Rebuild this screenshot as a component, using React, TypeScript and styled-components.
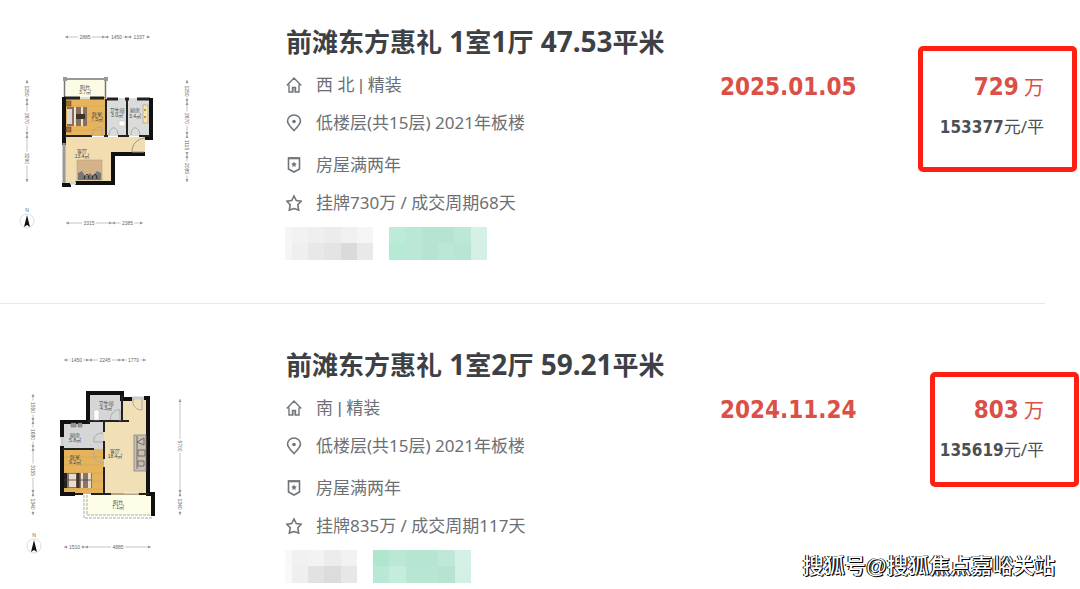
import React from "react";
import styled, { createGlobalStyle } from "styled-components";

const Global = createGlobalStyle`
  * { box-sizing: border-box; }
  body {
    margin: 0;
    background: #fff;
    color: #3d4145;
    font-family: "Noto Sans", "Noto Sans CJK SC", sans-serif;
  }
`;

const Page = styled.main`
  position: relative;
  overflow: hidden;
`;

const List = styled.ul`
  list-style: none;
  margin: 0;
  padding: 0 35px 0 0;
  display: flex;
  flex-direction: column;
  gap: 19px;
`;

const Item = styled.li`
  position: relative;
  display: grid;
  grid-template-columns: 286px 1fr 135px 190px;
  padding: 24px 0 43px;
  border-bottom: 1px solid #e9e9e9;
  &:last-child {
    border-bottom: 0;
    padding-bottom: 5px;
  }
`;

const PlanLink = styled.a`
  display: block;
  height: 210px;
  color: inherit;
`;

const PlanSvg = styled.svg`
  display: block;
  font-family: "Liberation Sans", "Noto Sans CJK SC", sans-serif;
  font-size: 5px;
  fill: #666;
`;

const Title = styled.h2`
  margin: 0 0 13px;
  font-size: 26px;
  line-height: 36px;
  font-weight: 700;
  white-space: nowrap;
`;

const Num = styled.span`
  font-size: 28px;
  line-height: 28px;
`;

const Facts = styled.div`
  display: flex;
  flex-direction: column;
  gap: 18px;
`;

const FactPair = styled.div`
  display: flex;
  flex-direction: column;
  gap: 14px;
`;

const Fact = styled.div`
  display: flex;
  align-items: center;
  gap: 14px;
  font-size: 17px;
  line-height: 24px;
  color: #6c7074;
  white-space: nowrap;
`;

const Bar = styled.span`
  font-family: "Liberation Sans", sans-serif;
  line-height: 1;
`;

const Icon = styled.svg`
  width: 16px;
  height: 18px;
  flex: none;
  fill: none;
  stroke: #70757a;
  stroke-width: 1.6;
`;

const Tags = styled.div`
  display: flex;
  gap: 16px;
  margin: 12px 0 0 -1px;
`;

const Mosaic = styled.svg`
  display: block;
  height: 33px;
`;

const DealDate = styled.div`
  margin-top: 46px;
  font: 700 24px/34px "DejaVu Sans Condensed", "DejaVu Sans", sans-serif;
  color: #dc4f46;
  white-space: nowrap;
`;

const Price = styled.div`
  margin-top: 46px;
  padding-right: 1px;
  text-align: right;
  white-space: nowrap;
`;

const Total = styled.div`
  font-size: 20px;
  line-height: 34px;
  color: #dc4f46;
  b {
    font: 700 24px/34px "DejaVu Sans Condensed", "DejaVu Sans", sans-serif;
  }
`;

const Unit = styled.div`
  margin-top: 10px;
  font-size: 17px;
  line-height: 24px;
  color: #4c5054;
  b {
    font: 700 17px/24px "DejaVu Sans Condensed", "DejaVu Sans", sans-serif;
  }
`;

const Highlight = styled.div<{ $wide?: boolean }>`
  position: absolute;
  top: ${(p) => (p.$wide ? 46 : 49)}px;
  right: ${(p) => (p.$wide ? -32 : -34)}px;
  width: ${(p) => (p.$wide ? 159 : 149)}px;
  height: ${(p) => (p.$wide ? 126 : 115)}px;
  border: 5px solid #ff2014;
  border-radius: 5px;
  pointer-events: none;
`;

const Watermark = styled.div`
  position: absolute;
  right: 25px;
  bottom: 6px;
  font: 500 21px/32px "Liberation Sans", "Noto Sans CJK SC", sans-serif;
  color: #fff;
  text-shadow: 1px 1px 0 #000, -1px 0 0 #000, 1px 0 0 #000;
  white-space: nowrap;
`;

const HomeIcon = () => (
  <Icon viewBox="0 0 16 18" aria-hidden="true">
    <path d="M.8 9.500 8 2l7.200 7.500M3 8.500V16h3.500v-4.500h3V16H13V8.500" strokeWidth="1.400" />
    <path d="M8 12v4.500" strokeWidth="1" />
  </Icon>
);
const PinIcon = () => (
  <Icon viewBox="0 0 16 18" aria-hidden="true">
    <path d="M8 16.500C4 12.500 1.500 10 1.500 7a6.500 6 0 0 1 13 0c0 3-2.500 5.500-6.500 9.500Z" />
    <circle cx="8" cy="7.500" r="1.800" fill="#70757a" stroke="none" />
  </Icon>
);
const BadgeIcon = () => (
  <Icon viewBox="0 0 16 18" aria-hidden="true">
    <path d="M2.500 2h11v11L8 16l-5.500-3Z" />
    <path d="M2 2.300h12" strokeWidth="2" />
    <path d="m8 5.500.9 1.800 1.900.3-1.400 1.400.3 2L8 10.100l-1.700.9.3-2-1.400-1.400 1.900-.3Z" fill="#70757a" stroke="none" />
  </Icon>
);
const StarIcon = () => (
  <Icon viewBox="0 0 16 18" aria-hidden="true">
    <path d="M8 2 10.300 6.500 15.200 7.300 11.800 10.800 12.700 16 8 14.600 3.300 16 4.200 10.800.8 7.300 5.700 6.500Z" />
  </Icon>
);

type Cells = { edges: number[]; top: string[]; bottom: string[] };

const CensoredTag = ({ edges, top, bottom }: Cells) => {
  const width = edges[edges.length - 1];
  return (
    <Mosaic width={width} viewBox={`0 0 ${width} 33`} shapeRendering="crispEdges" aria-hidden="true">
      {top.map((c, i) => (
        <rect key={i} x={edges[i]} y="0" width={edges[i + 1] - edges[i]} height="16" fill={c} />
      ))}
      {bottom.map((c, i) => (
        <rect key={i} x={edges[i]} y="16" width={edges[i + 1] - edges[i]} height="17" fill={c} />
      ))}
    </Mosaic>
  );
};

const greyWide: Cells = {
  edges: [0, 7, 23, 39, 56, 72, 88],
  top: ["#f5f5f5", "#f2f2f2", "#efefef", "#ececec", "#f0f0f0", "#f5f5f5"],
  bottom: ["#f5f5f5", "#edf0ef", "#e8e8e8", "#e4e4e4", "#dadada", "#e9e9e9"],
};
const greyNarrow: Cells = {
  edges: [0, 7, 23, 39, 56, 72],
  top: ["#f8f8f8", "#f1f1f1", "#f3f3f3", "#ececec", "#f2f2f2"],
  bottom: ["#f9f9f9", "#edf0ef", "#e2e2e2", "#dcdcdc", "#e7e7e7"],
};
const greenA: Cells = {
  edges: [0, 16, 33, 49, 65, 82, 98],
  top: ["#bdebd8", "#b9e8d4", "#b5e5d0", "#b5e5d0", "#bee8d6", "#d5f1e5"],
  bottom: ["#b7ead5", "#bae8d5", "#b6e4d1", "#bbe7d5", "#b9e6d3", "#d4f0e4"],
};
const greenB: Cells = {
  edges: [0, 16, 33, 49, 65, 82, 98],
  top: ["#b0e5ce", "#bae8d4", "#b6e5d1", "#b6e5d1", "#c0e8d8", "#d5f1e5"],
  bottom: ["#b9e9d5", "#c4eddd", "#b9e5d3", "#b9e6d3", "#b6e4d0", "#d2f0e4"],
};

const Compass = ({ x, y }: { x: number; y: number }) => (
  <g transform={`translate(${x} ${y})`}>
    <text x="0" y="-9" textAnchor="middle">N</text>
    <circle r="7" fill="none" stroke="#ddd" />
    <path d="M0-6 3 6 0 4-3 6Z" fill="#111" />
  </g>
);

type DimProps = { x: number; y: number; len: number; label: string; vertical?: boolean };

const Dim = ({ x, y, len, label, vertical }: DimProps) => (
  <g transform={`translate(${x} ${y})${vertical ? " rotate(90)" : ""}`}>
    <path d={`M0 0H${len / 2 - 7}M${len / 2 + 7} 0H${len}`} stroke="#c4c4c4" />
    <path d={`M0 0l3-1.500v3ZM${len} 0l-3-1.500v3Z`} fill="#999" />
    <text x={len / 2} y="2" textAnchor="middle">{label}</text>
  </g>
);

const PlanOne = () => (
  <PlanSvg width="210" height="210" viewBox="0 24 210 210" role="img" aria-label="户型图">
    <Dim x={65} y={37} len={40} label="2885" />
    <Dim x={105} y={37} len={23} label="1450" />
    <Dim x={128} y={37} len={22} label="1337" />
    <Dim x={27} y={80} len={22} label="1250" vertical />
    <Dim x={27} y={102} len={33} label="2670" vertical />
    <Dim x={27} y={135} len={47} label="3290" vertical />
    <Dim x={187} y={80} len={22} label="1250" vertical />
    <Dim x={187} y={102} len={33} label="2670" vertical />
    <Dim x={187} y={135} len={20} label="1115" vertical />
    <Dim x={187} y={155} len={27} label="2085" vertical />
    <Dim x={66} y={223} len={46} label="3315" />
    <Dim x={112} y={223} len={31} label="2385" />
    <rect x="64.500" y="79" width="41" height="19" fill="#fcfce6" stroke="#777" strokeWidth="1.500" />
    <path d="M63 77h4v4h-4ZM104 77h4v4h-4Z" fill="#999" />
    <rect x="65" y="98" width="40" height="38" fill="#e5b45d" />
    <path d="M65 106h40M65 114h40M65 122h40M65 130h40" stroke="#d5a04a" strokeWidth=".5" />
    <rect x="106" y="99" width="21" height="37" fill="#dadcdc" />
    <rect x="128" y="99" width="22" height="37" fill="#dadcdc" />
    <path d="M65 137h80v15h-31v32H65Z" fill="#f1ddb0" />
    <path d="M64 98H80M90 98h14M107 99h11M125 99h4M137 99h13" stroke="#222" strokeWidth="3" />
    <path d="M80 98h10M118 99h7M129 99h8" stroke="#ddd" strokeWidth="2" />
    <path d="M64 97v48M151 98v40h-6M64 183v2H71M75 183h38v-29h32" stroke="#111" strokeWidth="4" fill="none" />
    <path d="M106 99v37M127 99v37M65 136h27M104 136h4M118 136h11M139 136h11" stroke="#222" strokeWidth="2" fill="none" />
    <path d="M64 143v40" stroke="#999" strokeWidth="3" />
    <path d="M70 183h6" stroke="#ccd8dd" strokeWidth="3" />
    <rect x="66" y="101" width="5" height="5" fill="#9d7138" stroke="#5c4020" strokeWidth=".5" />
    <rect x="66" y="127" width="5" height="5" fill="#9d7138" stroke="#5c4020" strokeWidth=".5" />
    <rect x="67" y="107" width="20" height="19" fill="#87705c" />
    <rect x="67" y="109" width="5" height="15" fill="#d8d8da" />
    <path d="M75 107v19M82 107v19" stroke="#eee1d0" strokeWidth="2" />
    <path d="M76 114h9v5h-9Z" fill="#3f3229" />
    <rect x="143" y="105" width="5" height="18" fill="#f6e4aa" stroke="#9c864e" strokeWidth=".5" />
    <circle cx="145" cy="110" r="1" fill="#a08030" />
    <circle cx="145" cy="117" r="1" fill="#a08030" />
    <rect x="119" y="121" width="6" height="5" fill="#fff" stroke="#bbb" strokeWidth=".5" />
    <path d="M109 135c1-10 9-9 9 0M131 135c0-10 8-9 9 0M92 136c0-8 6-9 10-9v9" stroke="#aaa" fill="none" />
    <path d="M132 152c0-8 5-13 13-14M132 152h12" stroke="#999" fill="none" />
    <rect x="77" y="160" width="25" height="20" fill="#d5b389" stroke="#b79972" strokeWidth=".5" />
    <path d="M78 180v-7l4-2 3 5h2l3-3 3 3 4-5 4 2v7Z" fill="#777679" />
    <path d="M84 179c1-6 5-6 5 0M92 179c1-6 5-6 5 0" stroke="#222" fill="none" />
    <g textAnchor="middle" fill="#444">
      <text x="85" y="89">阳台</text><text x="85" y="94">3.7㎡</text>
      <text x="97" y="116">卧室</text><text x="97" y="121">7.5㎡</text>
      <text x="117" y="112">卫生间</text><text x="117" y="117">3.0㎡</text>
      <text x="135" y="112">厨房</text><text x="135" y="118">3.4㎡</text>
      <text x="82" y="153">客厅</text><text x="82" y="158">13.4㎡</text>
    </g>
    <Compass x={27} y={221} />
  </PlanSvg>
);

const PlanTwo = () => (
  <PlanSvg width="210" height="210" viewBox="0 348 210 210" role="img" aria-label="户型图">
    <Dim x={64} y={361} len={25} label="1450" />
    <Dim x={89} y={361} len={32} label="2245" />
    <Dim x={121} y={361} len={25} label="1770" />
    <Dim x={33} y={395} len={27} label="1550" vertical />
    <Dim x={33} y={422} len={27} label="1680" vertical />
    <Dim x={33} y={449} len={45} label="3155" vertical />
    <Dim x={33} y={494} len={22} label="1340" vertical />
    <Dim x={180} y={400} len={94} label="5700" vertical />
    <Dim x={180} y={494} len={22} label="1340" vertical />
    <Dim x={64} y={548} len={21} label="1510" />
    <Dim x={85} y={548} len={66} label="4885" />
    <path d="M104 422h18v-23h26v96h-44Z" fill="#f1dfb6" />
    <rect x="89" y="394" width="33" height="28" fill="#d5d7d7" />
    <rect x="63" y="422" width="41" height="28" fill="#d5d7d7" />
    <rect x="63" y="450" width="41" height="45" fill="#e4b35c" />
    <path d="M63 458h40M63 466h40M63 474h40M63 482h40M63 490h40" stroke="#d1a04d" strokeWidth=".5" />
    <path d="M85 496h66v20H85Z" fill="#fdfde8" />
    <path d="M84 496v23h69M87 496v20h64" stroke="#aaa" strokeDasharray="3 1" fill="none" />
    <path d="M62 438v-15h26v-29h34v6h10M144 399h4v96h5v22M62 447v48h13" stroke="#111" strokeWidth="4" fill="none" />
    <path d="M132 399h12M62 438v9" stroke="#ccc" strokeWidth="3" />
    <path d="M88 422h41M104 422v11M104 442v18M122 396v26M63 450h31M104 468v27M75 495h8M91 495h20M139 495h10" stroke="#222" strokeWidth="2" fill="none" />
    <path d="M111 495h28" stroke="#b8a280" strokeWidth="2" />
    <path d="M124 494h14" stroke="#eee" />
    <path d="M133 399v5c1 5 5 7 9 7v-11M110 421c1-7 5-11 10-10v11M103 434c-7 0-10 4-9 9h9M104 464c-7 0-11-5-10-11" stroke="#aaa" fill="none" />
    <rect x="94" y="411" width="5" height="10" fill="#fff" stroke="#bbb" strokeWidth=".5" />
    <path d="M71 424h5v4h-5ZM78 424h4v4h-4Z" fill="#999" stroke="#666" strokeWidth=".5" />
    <rect x="134" y="436" width="12" height="36" fill="#c9c1b5" stroke="#777" strokeWidth=".7" />
    <path d="M137 437v33M137 443l7-4v7ZM138 451h7v6h-7ZM138 462h6v5h-6Z" stroke="#776b61" fill="none" />
    <rect x="64" y="474" width="28" height="15" fill="#8b7461" />
    <path d="M64 474h3v15h-3Z" fill="#222" />
    <path d="M69 475h7v13h-7ZM81 474h2v15h-2ZM88 474h3v15h-3Z" fill="#e8ddd3" />
    <path d="M78 474v15" stroke="#3b302b" strokeWidth="3" />
    <path d="M64 481h27" stroke="#4e4037" strokeWidth=".8" />
    <g textAnchor="middle" fill="#444">
      <text x="106" y="406">卫生间</text><text x="106" y="411">4.3㎡</text>
      <text x="75" y="438">厨房</text><text x="75" y="443">5.8㎡</text>
      <text x="75" y="460">卧室</text><text x="75" y="465">9.2㎡</text>
      <text x="115" y="454">客厅</text><text x="115" y="459">18.4㎡</text>
      <text x="118" y="505">阳台</text><text x="118" y="510">7.1㎡</text>
    </g>
    <Compass x={34} y={547} />
  </PlanSvg>
);

type Deal = {
  plan: React.ReactNode;
  rooms: [string, string];
  area: string;
  facing: string;
  listed: string;
  date: string;
  total: string;
  unit: string;
  grey: Cells;
  green: Cells;
  wide?: boolean;
};

const deals: Deal[] = [
  { plan: <PlanOne />, rooms: ["1", "1"], area: "47.53", facing: "西 北", listed: "挂牌730万 / 成交周期68天", date: "2025.01.05", total: "729", unit: "153377", grey: greyWide, green: greenA, wide: true },
  { plan: <PlanTwo />, rooms: ["1", "2"], area: "59.21", facing: "南", listed: "挂牌835万 / 成交周期117天", date: "2024.11.24", total: "803", unit: "135619", grey: greyNarrow, green: greenB },
];

export default function App() {
  return (
    <Page>
      <Global />
      <List>
        {deals.map((d) => (
          <Item key={d.date}>
            <PlanLink href="#">{d.plan}</PlanLink>
            <div>
              <Title>
                前滩东方惠礼<Num> {d.rooms[0]}</Num>室<Num>{d.rooms[1]}</Num>厅<Num> {d.area}</Num>平米
              </Title>
              <Facts>
                <FactPair>
                  <Fact><HomeIcon /><span>{d.facing} <Bar>|</Bar> 精装</span></Fact>
                  <Fact><PinIcon />低楼层(共15层) 2021年板楼</Fact>
                </FactPair>
                <FactPair>
                  <Fact><BadgeIcon />房屋满两年</Fact>
                  <Fact><StarIcon />{d.listed}</Fact>
                </FactPair>
              </Facts>
              <Tags>
                <CensoredTag {...d.grey} />
                <CensoredTag {...d.green} />
              </Tags>
            </div>
            <DealDate>{d.date}</DealDate>
            <Price>
              <Total><b>{d.total}</b> 万</Total>
              <Unit><b>{d.unit}</b>元/平</Unit>
            </Price>
            <Highlight $wide={d.wide} />
          </Item>
        ))}
      </List>
      <Watermark>搜狐号@搜狐焦点嘉峪关站</Watermark>
    </Page>
  );
}
